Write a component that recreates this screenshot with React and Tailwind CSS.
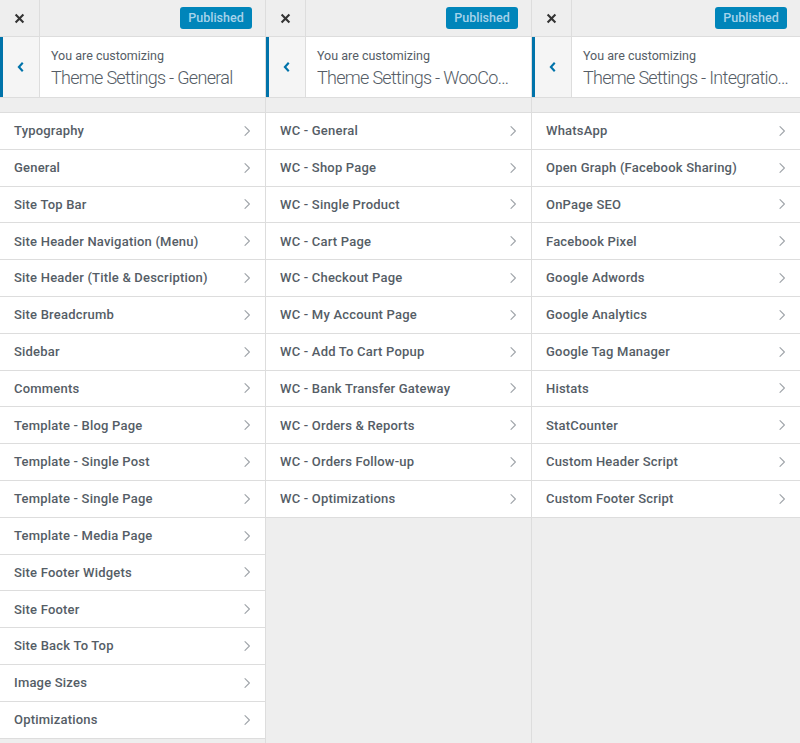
import React from 'react';

const panels = [
  {
    title: 'Theme Settings - General',
    items: [
      'Typography',
      'General',
      'Site Top Bar',
      'Site Header Navigation (Menu)',
      'Site Header (Title & Description)',
      'Site Breadcrumb',
      'Sidebar',
      'Comments',
      'Template - Blog Page',
      'Template - Single Post',
      'Template - Single Page',
      'Template - Media Page',
      'Site Footer Widgets',
      'Site Footer',
      'Site Back To Top',
      'Image Sizes',
      'Optimizations',
    ],
  },
  {
    title: 'Theme Settings - WooCommerce',
    items: [
      'WC - General',
      'WC - Shop Page',
      'WC - Single Product',
      'WC - Cart Page',
      'WC - Checkout Page',
      'WC - My Account Page',
      'WC - Add To Cart Popup',
      'WC - Bank Transfer Gateway',
      'WC - Orders & Reports',
      'WC - Orders Follow-up',
      'WC - Optimizations',
    ],
  },
  {
    title: 'Theme Settings - Integrations',
    items: [
      'WhatsApp',
      'Open Graph (Facebook Sharing)',
      'OnPage SEO',
      'Facebook Pixel',
      'Google Adwords',
      'Google Analytics',
      'Google Tag Manager',
      'Histats',
      'StatCounter',
      'Custom Header Script',
      'Custom Footer Script',
    ],
  },
];

const Chevron = ({ className }) => (
  <svg viewBox="0 0 20 20" className={className} fill="none" stroke="currentColor">
    <path d="M7.5 4.5 13 10l-5.5 5.5" strokeWidth="1.4" strokeLinecap="round" strokeLinejoin="round" />
  </svg>
);

const Panel = ({ title, items, last }) => (
  <div className={`flex flex-col bg-[#eeeeee] ${last ? '' : 'border-r border-[#dddddd]'}`}>
    {/* top bar */}
    <div className="h-[37px] flex items-center border-b border-[#dddddd]">
      <div className="w-[40px] h-full flex items-center justify-center border-r border-[#dddddd]">
        <svg viewBox="0 0 20 20" className="w-[13px] h-[13px] text-[#333]" stroke="currentColor">
          <path d="M4 4l12 12M16 4 4 16" strokeWidth="3.2" strokeLinecap="butt" />
        </svg>
      </div>
      <div className="flex-1" />
      <div className="mr-[13px] h-[22px] w-[72px] rounded-[3px] bg-[#0085ba] text-[#a6d3ea] text-[12.5px] font-medium flex items-center justify-center">
        Published
      </div>
    </div>
    {/* header */}
    <div className="h-[61px] flex bg-white border-b border-[#dddddd]">
      <div className="w-[40px] flex items-center justify-center bg-[#f5f5f5] border-l-[3px] border-[#0073aa] border-r border-r-[#dddddd]">
        <svg viewBox="0 0 20 20" className="w-[14px] h-[14px] text-[#0073aa]" fill="none" stroke="currentColor">
          <path d="M12.5 4 7 10l5.5 6" strokeWidth="3" strokeLinecap="butt" strokeLinejoin="miter" />
        </svg>
      </div>
      <div className="flex-1 min-w-0 pl-[11px] pr-[10px] pt-[11px]">
        <div className="text-[12.5px] leading-[16px] text-[#555d66]">You are customizing</div>
        <div className="text-[18px] leading-[28px] font-light tracking-[-0.7px] text-[#555d66] truncate">{title}</div>
      </div>
    </div>
    <div className="h-[14px]" />
    {/* items */}
    <div className="border-t border-[#dddddd]">
      {items.map((it) => (
        <div key={it} className="h-[36.8px] bg-white border-b border-[#dddddd] flex items-center pl-[14px] pr-[10px]">
          <span className="flex-1 text-[13px] font-medium text-[#555d66] tracking-[0.2px]">{it}</span>
          <Chevron className="w-[16px] h-[16px] text-[#a0a5aa]" />
        </div>
      ))}
    </div>
  </div>
);

export default function App() {
  return (
    <div
      className="w-[800px] h-[743px] overflow-hidden grid grid-cols-[266px_266px_268px] bg-[#eeeeee]"
      style={{ fontFamily: 'Roboto, "Liberation Sans", sans-serif' }}
    >
      {panels.map((p, i) => (
        <Panel key={p.title} {...p} last={i === panels.length - 1} />
      ))}
    </div>
  );
}
